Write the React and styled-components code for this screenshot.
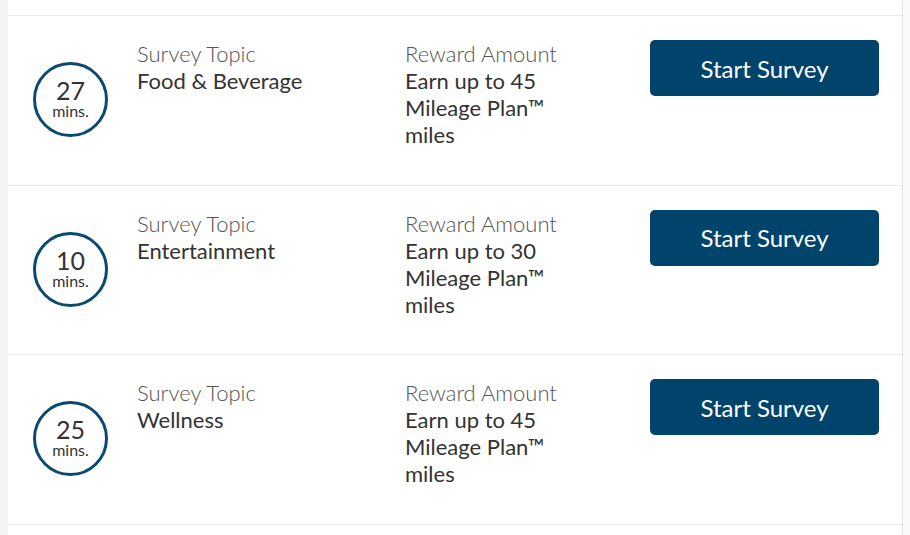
import React from "react";
import styled, { createGlobalStyle } from "styled-components";

const surveys = [
  { mins: 27, topic: "Food & Beverage", miles: 45 },
  { mins: 10, topic: "Entertainment", miles: 30 },
  { mins: 25, topic: "Wellness", miles: 45 },
];

const App = () => {
  return (
    <>
      <GlobalStyle />
      <Page>
        <Card>
          <TopEdge />
          {surveys.map((s, i) => (
            <Row key={i}>
              <TimeCell>
                <Circle>
                  <Mins>{s.mins}</Mins>
                  <MinsLabel>mins.</MinsLabel>
                </Circle>
              </TimeCell>
              <Info>
                <Label>Survey Topic</Label>
                <Value>{s.topic}</Value>
              </Info>
              <Info>
                <Label>Reward Amount</Label>
                <Value>
                  Earn up to {s.miles}
                  <br />
                  Mileage Plan™
                  <br />
                  miles
                </Value>
              </Info>
              <Action>
                <StartButton>Start Survey</StartButton>
              </Action>
            </Row>
          ))}
        </Card>
      </Page>
    </>
  );
};

export default App;

const GlobalStyle = createGlobalStyle`
  html, body {
    margin: 0;
    padding: 0;
    background: #fafafa;
    font-family: Lato, "Open Sans", "Liberation Sans", sans-serif;
  }
`;

const Page = styled.div`
  display: flex;
  width: 910px;
  height: 535px;
  overflow: hidden;
  background: #fafafa;
  border-left: 8px solid #f4f4f4;
  box-sizing: border-box;
`;

const Card = styled.div`
  width: 895px;
  background: #fff;
  border-right: 1px solid #e4e4e4;
  box-sizing: border-box;
  flex-shrink: 0;
`;

const TopEdge = styled.div`
  height: 15px;
  border-bottom: 1px solid #e8e8e8;
`;

const Row = styled.div`
  display: grid;
  grid-template-columns: 104px 268px 245px 229px;
  height: 169.5px;
  padding: 24px 0 0 25px;
  box-sizing: border-box;
  border-bottom: 1px solid #e8e8e8;
`;

const TimeCell = styled.div`
  display: flex;
  align-items: flex-start;
  padding-top: 22px;
`;

const Circle = styled.div`
  width: 75px;
  height: 75px;
  border: 3px solid #0b4a70;
  border-radius: 50%;
  box-sizing: border-box;
  display: flex;
  flex-direction: column;
  align-items: center;
  justify-content: center;
  padding-bottom: 2px;
  color: #333;
`;

const Mins = styled.div`
  font-size: 25px;
  line-height: 25px;
`;

const MinsLabel = styled.div`
  font-size: 16px;
  line-height: 16px;
`;

const Info = styled.div`
  display: flex;
  flex-direction: column;
`;

const Label = styled.div`
  font-size: 22px;
  font-weight: 300;
  color: #555;
  line-height: 27px;
`;

const Value = styled.div`
  font-size: 22px;
  color: #333;
  line-height: 27px;
`;

const Action = styled.div`
  display: flex;
  align-items: flex-start;
`;

const StartButton = styled.button`
  width: 229px;
  height: 56px;
  border: none;
  border-radius: 5px;
  background: #00436b;
  color: #fff;
  font-family: Lato, "Open Sans", "Liberation Sans", sans-serif;
  font-size: 24px;
  font-weight: 400;
  cursor: pointer;
`;
